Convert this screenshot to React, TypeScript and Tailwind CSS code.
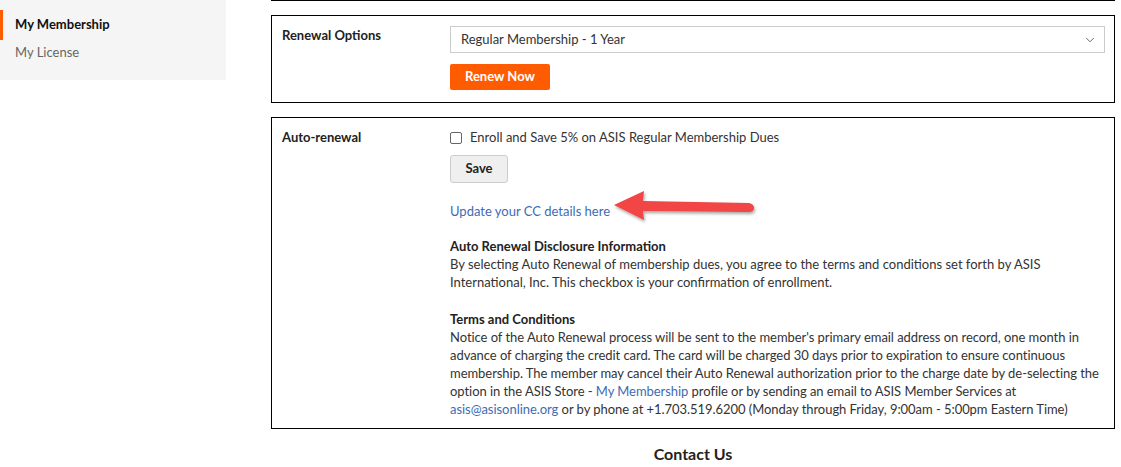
import { ChevronDown } from 'lucide-react'

const FONT = { fontFamily: 'Lato, "Noto Sans", sans-serif' }

export default function App() {
  return (
    <div className="flex h-[467px] overflow-hidden bg-white text-[13px] text-[#333]" style={FONT}>
      {/* Sidebar */}
      <div className="w-[226px] shrink-0 self-start bg-[#f5f5f5] pb-[13px]">
        <div className="h-[10px]" />
        <div className="border-l-[3px] border-[#ff5b00] py-[5px] pl-[12px] text-[13px] font-bold text-[#111]">My Membership</div>
        <div className="pt-[3px] pb-[5px] pl-[15px] text-[13px] text-[#666]">My License</div>
      </div>

      {/* Main */}
      <div className="ml-[45px] w-[844px] shrink-0">
        <div className="h-[1px] bg-black" />

        {/* Renewal options */}
        <div className="mt-[14px] flex border border-black py-[10px] pr-[9px] pl-[10px] pb-[12px]">
          <div className="w-[168px] shrink-0 font-bold text-[#222]">Renewal Options</div>
          <div className="flex-1">
            <div className="flex h-[27px] items-center justify-between border border-[#ccc] pl-[10px] pr-[7px] text-[#333]">
              <span>Regular Membership - 1 Year</span>
              <ChevronDown size={14} strokeWidth={1.5} className="text-[#555]" />
            </div>
            <button className="mt-[11px] h-[26px] w-[100px] rounded-[2px] bg-[#ff5b00] font-bold text-white">Renew Now</button>
          </div>
        </div>

        {/* Auto renewal */}
        <div className="mt-[14px] flex border border-black pl-[10px] pr-[9px] pt-[11px] pb-[10px]">
          <div className="w-[168px] shrink-0 font-bold leading-[16px] text-[#222]">Auto-renewal</div>
          <div className="flex-1">
            <label className="flex h-[18px] items-center gap-[8px]">
              <span className="h-[12px] w-[12px] rounded-[2px] border border-[#666] bg-white" />
              <span>Enroll and Save 5% on ASIS Regular Membership Dues</span>
            </label>
            <button className="mt-[8px] h-[28px] w-[58px] rounded-[3px] border border-[#ccc] bg-[#efefef] font-bold text-[#222]">Save</button>
            <div className="relative mt-[19px] leading-[18px]">
              <a className="text-[#3e6bb5]">Update your CC details here</a>
              <svg className="absolute left-[158px] top-[-16px]" width="150" height="40" viewBox="0 0 150 40">
                <defs>
                  <filter id="sh" x="-10%" y="-30%" width="120%" height="160%">
                    <feDropShadow dx="1" dy="2" stdDeviation="1.5" floodColor="#000" floodOpacity="0.35" />
                  </filter>
                </defs>
                <g filter="url(#sh)" fill="#f24444">
                  <path d="M6 19 L36 5 L35 15 L141 17 Q146 18 146 22 Q146 26 141 26 L35 25 L36 34 Z" />
                </g>
              </svg>
            </div>

            <div className="mt-[17px] whitespace-nowrap leading-[18px]">
              <div className="font-bold text-[#222]">Auto Renewal Disclosure Information</div>
              <p>
                By selecting Auto Renewal of membership dues, you agree to the terms and conditions set forth by ASIS
                <br />
                International, Inc. This checkbox is your confirmation of enrollment.
              </p>
              <div className="mt-[19px] font-bold text-[#222]">Terms and Conditions</div>
              <p className="tracking-[-0.05px]">
                Notice of the Auto Renewal process will be sent to the member's primary email address on record, one month in
                <br />
                advance of charging the credit card. The card will be charged 30 days prior to expiration to ensure continuous
                <br />
                membership. The member may cancel their Auto Renewal authorization prior to the charge date by de-selecting the
                <br />
                option in the ASIS Store - <a className="text-[#3e6bb5]">My Membership</a> profile or by sending an email to ASIS Member Services at
                <br />
                <a className="text-[#3e6bb5]">asis@asisonline.org</a> or by phone at +1.703.519.6200 (Monday through Friday, 9:00am - 5:00pm Eastern Time)
              </p>
            </div>
          </div>
        </div>

        <div className="mt-[13px] text-center text-[16px] font-bold text-[#222]">Contact Us</div>
      </div>
    </div>
  )
}
